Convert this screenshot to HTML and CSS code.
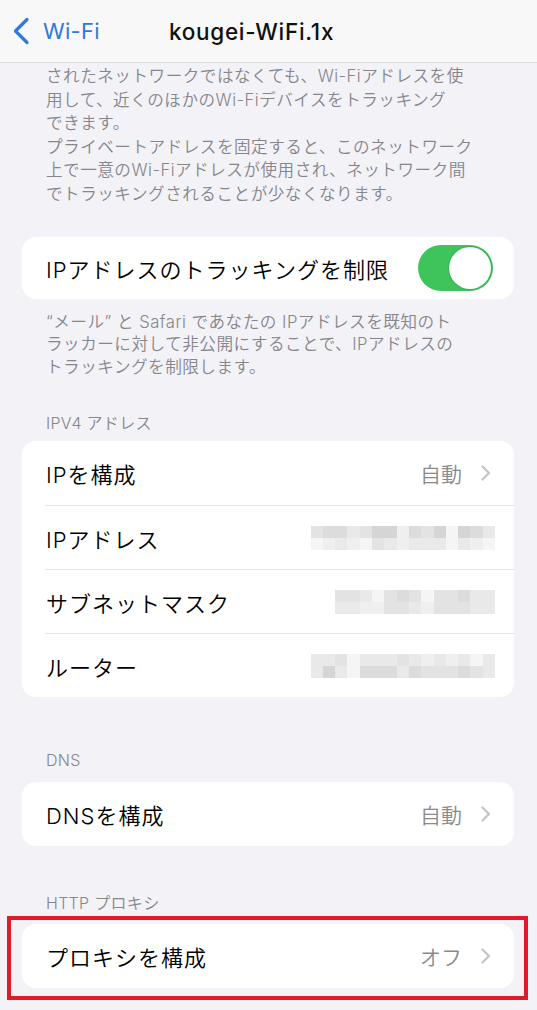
FILE: index.html
```html
<!DOCTYPE html>
<html lang="ja">
<head>
<meta charset="utf-8">
<title>kougei-WiFi.1x</title>
<link rel="stylesheet" href="styles.css">
</head>
<body>
<div class="screen">
  <header class="nav">
    <a class="back">
      <svg class="back-icon" width="18" height="28" viewBox="0 0 18 28"><path d="M15 2.5 L3.5 14 L15 25.5" fill="none" stroke="#2f7ad8" stroke-width="3.2" stroke-linecap="round" stroke-linejoin="round"/></svg>
      <span class="back-text">Wi-Fi</span>
    </a>
    <h1 class="title">kougei-WiFi.1x</h1>
  </header>

  <main class="content">
    <p class="note note-top">されたネットワークではなくても、Wi-Fiアドレスを使<br>用して、近くのほかのWi-Fiデバイスをトラッキング<br>できます。<br>プライベートアドレスを固定すると、このネットワーク<br>上で一意のWi-Fiアドレスが使用され、ネットワーク間<br>でトラッキングされることが少なくなります。</p>

    <section class="card card-toggle">
      <div class="row row-toggle">
        <span class="label">IPアドレスのトラッキングを制限</span>
        <span class="switch"><span class="knob"></span></span>
      </div>
    </section>
    <p class="note note-bottom">“メール” と Safari であなたの IPアドレスを既知のト<br>ラッカーに対して非公開にすることで、IPアドレスの<br>トラッキングを制限します。</p>

    <h2 class="section-title sec-ipv4">IPV4 アドレス</h2>
    <section class="card">
      <div class="row">
        <span class="label">IPを構成</span>
        <span class="value">自動</span>
        <svg class="chev" width="10" height="16" viewBox="0 0 10 16"><path d="M1.5 1.5 L8 8 L1.5 14.5" fill="none" stroke="#c4c4c7" stroke-width="2.2" stroke-linecap="round" stroke-linejoin="round"/></svg>
      </div>
      <div class="row">
        <span class="label">IPアドレス</span>
        <span class="pix pix-15">
          <i class="s3"></i><i class="s2"></i><i class="s2"></i><i class="s4"></i><i class="s3"></i><i class="s1"></i><i class="s1"></i><i class="s5"></i><i class="s2"></i><i class="s3"></i><i class="s1"></i><i class="s6"></i><i class="s1"></i><i class="s2"></i><i class="s4"></i>
          <i class="s6"></i><i class="s5"></i><i class="s4"></i><i class="s5"></i><i class="s6"></i><i class="s3"></i><i class="s4"></i><i class="s5"></i><i class="s4"></i><i class="s4"></i><i class="s4"></i><i class="s6"></i><i class="s4"></i><i class="s5"></i><i class="s6"></i>
        </span>
      </div>
      <div class="row">
        <span class="label">サブネットマスク</span>
        <span class="pix pix-13">
          <i class="s3"></i><i class="s3"></i><i class="s4"></i><i class="s6"></i><i class="s3"></i><i class="s2"></i><i class="s3"></i><i class="s6"></i><i class="s3"></i><i class="s3"></i><i class="s2"></i><i class="s4"></i><i class="s4"></i>
          <i class="s4"></i><i class="s4"></i><i class="s5"></i><i class="s5"></i><i class="s3"></i><i class="s3"></i><i class="s4"></i><i class="s5"></i><i class="s3"></i><i class="s3"></i><i class="s3"></i><i class="s4"></i><i class="s4"></i>
        </span>
      </div>
      <div class="row">
        <span class="label">ルーター</span>
        <span class="pix pix-15">
          <i class="s4"></i><i class="s4"></i><i class="s3"></i><i class="s6"></i><i class="s4"></i><i class="s4"></i><i class="s4"></i><i class="s3"></i><i class="s4"></i><i class="s5"></i><i class="s4"></i><i class="s5"></i><i class="s4"></i><i class="s6"></i><i class="s4"></i>
          <i class="s4"></i><i class="s1"></i><i class="s4"></i><i class="s6"></i><i class="s2"></i><i class="s2"></i><i class="s2"></i><i class="s4"></i><i class="s2"></i><i class="s3"></i><i class="s3"></i><i class="s3"></i><i class="s2"></i><i class="s3"></i><i class="s4"></i>
        </span>
      </div>
    </section>

    <h2 class="section-title sec-dns">DNS</h2>
    <section class="card">
      <div class="row">
        <span class="label">DNSを構成</span>
        <span class="value">自動</span>
        <svg class="chev" width="10" height="16" viewBox="0 0 10 16"><path d="M1.5 1.5 L8 8 L1.5 14.5" fill="none" stroke="#c4c4c7" stroke-width="2.2" stroke-linecap="round" stroke-linejoin="round"/></svg>
      </div>
    </section>

    <h2 class="section-title sec-http">HTTP プロキシ</h2>
    <div class="highlight">
      <section class="card">
        <div class="row">
          <span class="label">プロキシを構成</span>
          <span class="value">オフ</span>
          <svg class="chev" width="10" height="16" viewBox="0 0 10 16"><path d="M1.5 1.5 L8 8 L1.5 14.5" fill="none" stroke="#c4c4c7" stroke-width="2.2" stroke-linecap="round" stroke-linejoin="round"/></svg>
        </div>
      </section>
    </div>
  </main>
</div>
</body>
</html>
```

FILE: styles.css
```css
* { box-sizing: border-box; }

html, body {
  margin: 0;
  padding: 0;
}

body {
  background: #f2f2f7;
  font-family: Inter, "Noto Sans CJK JP", sans-serif;
  color: #000;
}

.screen {
  width: 537px;
  height: 1010px;
  overflow: hidden;
  background: #f2f2f7;
}

.nav {
  height: 63px;
  background: #f8f8f9;
  border-bottom: 1px solid #dcdcdf;
  display: flex;
  align-items: center;
}

.back {
  display: flex;
  align-items: center;
  margin-left: 12px;
  color: #2f7ad8;
}

.back-icon {
  display: block;
}

.back-text {
  margin-left: 13px;
  font-size: 22px;
  letter-spacing: 0.3px;
}

.title {
  margin: 0 0 0 69px;
  font-size: 22.5px;
  font-weight: 500;
  color: #111;
  letter-spacing: 0.7px;
}

.content {
  padding: 0 23px 0 22px;
}

.note {
  margin: 0;
  padding-left: 24px;
  color: #86868b;
  font-size: 16.6px;
  font-weight: 350;
  letter-spacing: 0.5px;
  line-height: 23.6px;
}

.note-top {
  padding-top: 2px;
}

.note-bottom {
  margin-top: 12px;
  line-height: 22.6px;
}

.card {
  background: #fff;
  border-radius: 14px;
  overflow: hidden;
}

.card-toggle {
  margin-top: 30px;
}

.row {
  height: 64px;
  margin-left: 24px;
  padding-right: 23px;
  display: flex;
  align-items: center;
}

.row + .row {
  border-top: 1px solid #e3e3e6;
}

.row-toggle {
  height: 62px;
  padding-right: 21px;
}

.label {
  flex: 1;
  font-size: 22px;
  font-weight: 350;
  letter-spacing: 1px;
  color: #000;
  white-space: nowrap;
}

.value {
  font-size: 21px;
  font-weight: 350;
  color: #8a8a8e;
  margin-right: 19px;
}

.chev {
  display: block;
}

.switch {
  width: 75px;
  height: 46px;
  border-radius: 23px;
  background: #3dc45b;
  display: flex;
  justify-content: flex-end;
  align-items: center;
  padding: 2px;
}

.knob {
  width: 42px;
  height: 42px;
  border-radius: 50%;
  background: #fff;
  box-shadow: 0 0 0 1px rgba(40, 120, 60, 0.25);
}

.section-title {
  margin: 0;
  padding-left: 24px;
  font-size: 16px;
  font-weight: 350;
  color: #86868b;
  line-height: 20px;
  letter-spacing: 0.3px;
}

.sec-ipv4 {
  margin-top: 35px;
  margin-bottom: 8px;
}

.sec-dns {
  margin-top: 53px;
  margin-bottom: 12px;
}

.sec-http {
  margin-top: 47px;
  margin-bottom: 11px;
}

.pix {
  display: grid;
  grid-auto-rows: 12px;
  margin-right: -4px;
}

.pix-15 { grid-template-columns: repeat(15, 12.3px); }
.pix-13 { grid-template-columns: repeat(13, 12.3px); }

.pix i { display: block; }
.s1 { background: #d5d5d5; }
.s2 { background: #dcdcdc; }
.s3 { background: #e3e3e3; }
.s4 { background: #e9e9e9; }
.s5 { background: #efefef; }
.s6 { background: #f5f5f5; }

.highlight {
  position: relative;
}

.highlight::after {
  content: "";
  position: absolute;
  left: -15px;
  right: -14px;
  top: -8px;
  bottom: -12px;
  border: 4.5px solid #e01b28;
  pointer-events: none;
}
```
